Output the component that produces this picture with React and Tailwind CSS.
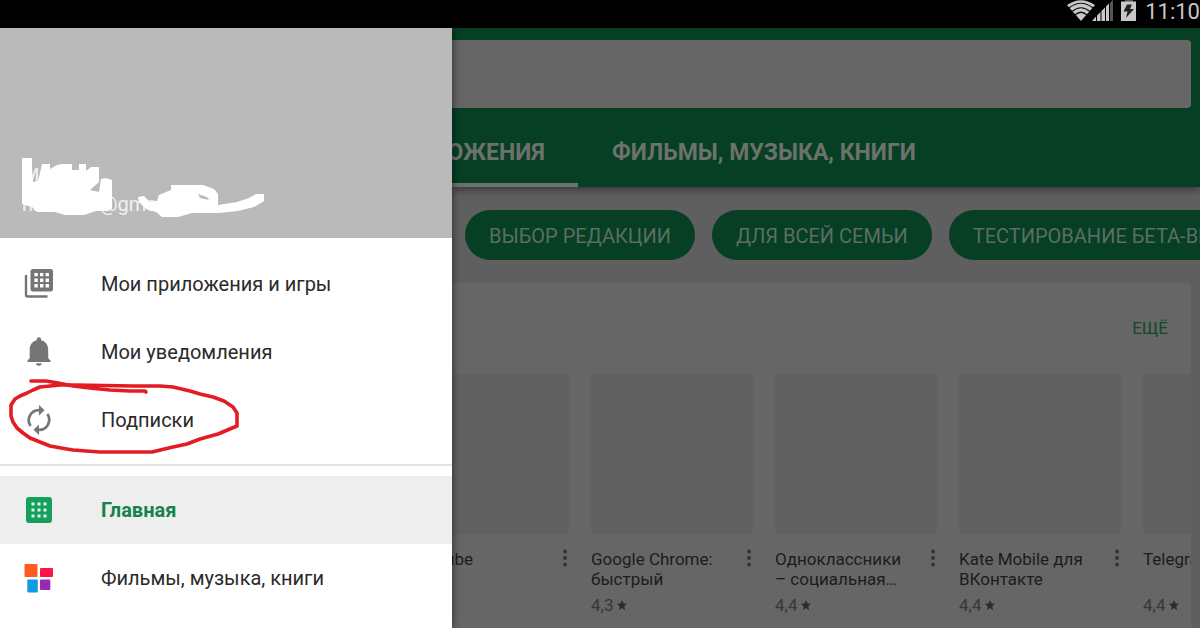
import React from 'react';

const chips = ['ВЫБОР РЕДАКЦИИ', 'ДЛЯ ВСЕЙ СЕМЬИ', 'ТЕСТИРОВАНИЕ БЕТА-ВЕРСИЙ'];

const apps = [
  { name: 'YouTube', rating: '' },
  { name: 'Google Chrome: быстрый', rating: '4,3' },
  { name: 'Одноклассники – социальная…', rating: '4,4' },
  { name: 'Kate Mobile для ВКонтакте', rating: '4,4' },
  { name: 'Telegram', rating: '4,4' },
];

function AppsIcon() {
  return (
    <svg viewBox="0 0 30 30" className="w-[30px] h-[30px]">
      <path d="M2 6v19.500a2 2 0 0 0 2 2h19.500" fill="none" stroke="#757575" strokeWidth="2.400" />
      <rect x="6.500" y="0" width="22.500" height="22.500" rx="2.500" fill="#757575" />
      <path d="M10.400 3.900h3.400v3.400h-3.400zM16 3.900h3.400v3.400H16zM21.600 3.900H25v3.400h-3.400zM10.400 9.500h3.400v3.400h-3.400zM16 9.500h3.400v3.400H16zM21.600 9.500H25v3.400h-3.400zM10.400 15.100h3.400v3.400h-3.400zM16 15.100h3.400v3.400H16zM21.600 15.100H25v3.400h-3.400z" fill="#fff" />
    </svg>
  );
}

function BellIcon() {
  return (
    <svg viewBox="0 0 30 30" className="w-[30px] h-[30px]" fill="#757575">
      <path d="M12.700 3.200V2.500a2.200 2.200 0 0 1 4.400 0v0.700c4.500 1 7.100 4.800 7.100 9.300v8.700l2.300 2.400v1.400H3.500v-1.400l2.200-2.400v-8.700c0-4.500 2.500-8.300 7-9.300z" />
      <path d="M12 26.300h5.700a2.800 2.400 0 0 1-5.700 0z" />
    </svg>
  );
}

function RenewIcon() {
  return (
    <svg viewBox="0 0 30 30" className="w-[30px] h-[30px]">
      <g fill="none" stroke="#757575" strokeWidth="2.700">
        <path d="M6.600 20.900A10 10 0 0 1 15 5.200" />
        <path d="M23.400 9.100A10 10 0 0 1 15 24.800" />
      </g>
      <path d="M15 0l5.500 5.300-5.500 5.300zM15 30l-5.500-5.300 5.500-5.300z" fill="#757575" />
    </svg>
  );
}

function HomeIcon() {
  return (
    <svg viewBox="0 0 30 30" className="w-[30px] h-[30px]">
      <rect x="2" y="2" width="26" height="26" rx="3" fill="#159f5c" />
      <path d="M7.500 7.500h3v3h-3zM13.500 7.500h3v3h-3zM19.500 7.500h3v3h-3zM7.500 13.500h3v3h-3zM13.500 13.500h3v3h-3zM19.500 13.500h3v3h-3zM7.500 19.500h3v3h-3zM13.500 19.500h3v3h-3zM19.500 19.500h3v3h-3z" fill="#dff5e8" />
    </svg>
  );
}

function MediaIcon() {
  return (
    <svg viewBox="0 0 30 30" className="w-[30px] h-[30px]">
      <rect x="0.500" y="1" width="13" height="13" rx="1" fill="#ff5a22" />
      <rect x="16" y="5" width="13" height="9" rx="1" fill="#fa1646" />
      <rect x="3.300" y="16.500" width="10.500" height="13" rx="1" fill="#0f9ae8" />
      <rect x="16" y="16.500" width="10.300" height="10.500" rx="1" fill="#9c27b0" />
    </svg>
  );
}

function StatusBar() {
  return (
    <header className="h-7 shrink-0 bg-black flex items-start justify-end overflow-hidden text-[#c8c8c8]">
      <svg viewBox="0 0 72 24" className="w-[72px] h-6" fill="currentColor">
        <path d="M0 5Q14-4.500 28 5L14 21z" />
        <g fill="none" stroke="#111" strokeWidth="1.200">
          <path d="M2 8Q14-1.500 26 8" />
          <path d="M5 11.500Q14 4 23 11.500" />
          <path d="M8 15Q14 9.500 20 15" />
        </g>
        <path d="M25 21L29 16.500V21zM30 15.500l3.500-3.500v9h-3.500zM34.500 11l3.500-3.500v13.500h-3.500zM39 6.500l3-3v17.500h-3z" />
        <path d="M43 2.500L46 0V21H43z" fill="#555" />
        <path d="M58 0h8v2h-8z" fill="#555" />
        <rect x="54" y="1.500" width="15" height="19.500" />
        <path d="M60 4.500h5l-2 4.500h4L59 18l1.500-6.500h-4z" fill="#222" />
      </svg>
      <time className="ml-1.5 text-[22px] leading-6">11:10</time>
    </header>
  );
}

function MenuItem({ icon, children, active }) {
  return (
    <li>
      <a
        href="#"
        className={`h-[68px] flex items-center pl-6 gap-[47px] text-xl ${
          active ? 'bg-[#eeeeee] text-[#15834a] font-bold' : 'text-[#2a2a2a]'
        }`}
      >
        {icon}
        <span>{children}</span>
      </a>
    </li>
  );
}

function Drawer() {
  return (
    <aside className="relative z-10 w-[452px] shrink-0 bg-white shadow-[0_0_8px_rgba(0,0,0,0.6)]">
      <div className="relative h-[210px] bg-[#bababa] px-[22px] pb-5 flex flex-col justify-end text-white">
        <p className="text-xl leading-7 text-white/80">Ми</p>
        <p className="text-xl leading-7 text-white/80">nnnnnn2@gmail</p>
        <svg viewBox="0 0 280 100" className="absolute left-0 bottom-[-2px] w-[280px] h-[100px]" fill="#fff">
          <path d="M22 18H32V28L33 42L38 41L40 33L42 24H50V29L57 25L62 24H72V30H79V24H86V31L91 27H99V42L90 50L99 52L101 39L106 38L112 40V68L107 71H96L84 75H65L55 72L37 72L32 67L22 64z" />
          <path d="M138 57L144 56L150 62L157 61L159 55L171 50V45H203L214 49L218 54V65L237 62L249 58L256 54H264V61L254 67L238 71L219 73H192L178 77H162L156 72L146 69L139 62z" />
          <path d="M198 54L207 57L209 60L200 58z" fill="#bababa" />
        </svg>
      </div>
      <nav className="relative">
        <ul className="pt-3 pb-2.5 border-b-2 border-[#e4e4e4]">
          <MenuItem icon={<AppsIcon />}>Мои приложения и игры</MenuItem>
          <MenuItem icon={<BellIcon />}>Мои уведомления</MenuItem>
          <MenuItem icon={<RenewIcon />}>Подписки</MenuItem>
        </ul>
        <ul className="pt-2.5">
          <MenuItem icon={<HomeIcon />} active>Главная</MenuItem>
          <MenuItem icon={<MediaIcon />}>Фильмы, музыка, книги</MenuItem>
        </ul>
        {/* hand-drawn marker around the subscriptions item */}
        <svg
          viewBox="0 0 260 90"
          className="absolute left-0 top-[132px] w-[260px] h-[90px] pointer-events-none"
          fill="none"
          stroke="#e31b23"
          strokeWidth="3.600"
          strokeLinecap="round"
          strokeLinejoin="round"
        >
          <path d="M31 11L46 11L58 13L73 16L90 18L110 20L130 21H145L146 22" />
          <path d="M60 15L40 17L33 20L27 23L20 26L15 29L11 35V46L13 52L17 58L23 63L30 68L40 72L50 76L61 78L73 80L86 81L100 82H152L173 77L187 74L200 69L218 64L237 56V43L233 37L224 31L213 27L200 24L190 21L173 17L160 16L133 16L75 15z" />
        </svg>
      </nav>
    </aside>
  );
}

function AppCard({ app }) {
  return (
    <li className="w-[162px] shrink-0">
      <div className="h-40 bg-[#616161]" />
      <div className="pt-[15px] flex items-start justify-between">
        <h3 className="w-[140px] h-10 text-[17px] leading-5 text-[#1c1c1c]">{app.name}</h3>
        <button type="button" aria-label="Меню">
          <svg viewBox="0 0 8 18" className="w-2 h-[18px]" fill="#343434">
            <circle cx="4" cy="2.500" r="2" />
            <circle cx="4" cy="9" r="2" />
            <circle cx="4" cy="15.500" r="2" />
          </svg>
        </button>
      </div>
      {app.rating && (
        <p className="mt-1 flex items-center gap-1 text-[17px] leading-6 text-[#373737]">
          {app.rating}
          <svg viewBox="0 0 24 24" className="w-2.5 h-2.5" fill="#2c2c2c">
            <path d="M12 0l3.500 8.300 8.500.7-6.500 5.900 2 9.100L12 19.200 4.500 24l2-9.100L0 9l8.500-.7z" />
          </svg>
        </p>
      )}
    </li>
  );
}

function Store() {
  return (
    <main className="flex-1 min-w-0 overflow-hidden bg-[#5f5f5f] flex flex-col">
      <div className="pt-3 bg-[#063f23] shadow-[0_3px_8px_rgba(0,0,0,0.4)]">
        <div className="mr-[9px]">
          <input type="search" aria-label="Поиск" className="block w-full h-[68px] bg-[#666666] rounded-r-sm outline-none" />
        </div>
        <nav className="h-[79px] flex text-[23px] font-bold whitespace-nowrap text-[#6b726c]">
          <a href="#" className="w-[126px] shrink-0 pr-[33px] pt-4 flex items-center justify-end border-b-4 border-[#6b726c]">
            ПРИЛОЖЕНИЯ
          </a>
          <a href="#" className="px-[34px] pt-4 border-b-4 border-transparent flex items-center">ФИЛЬМЫ, МУЗЫКА, КНИГИ</a>
        </nav>
      </div>
      <div className="pt-[23px] pl-[13px] flex gap-[17px]">
        {chips.map(chip => (
          <button
            key={chip}
            type="button"
            className="h-[50px] shrink-0 px-6 pt-0.5 rounded-full bg-[#063f23] text-xl text-[#5c6e63] whitespace-nowrap"
          >
            {chip}
          </button>
        ))}
      </div>
      <section className="mt-[23px] mr-[9px] flex-1 bg-[#666666] rounded-tr-sm overflow-hidden">
        <div className="h-[91px] pr-[23px] flex items-center justify-end">
          <a href="#" className="text-[17px] text-[#12482c]">ЕЩЁ</a>
        </div>
        {/* list is scrolled, so the first card starts behind the drawer */}
        <ul className="-ml-[45px] flex gap-[22px]">
          {apps.map(app => (
            <AppCard key={app.name} app={app} />
          ))}
        </ul>
      </section>
    </main>
  );
}

function App() {
  return (
    <div className="h-screen flex flex-col overflow-hidden font-['Roboto',sans-serif]">
      <StatusBar />
      <div className="flex-1 min-h-0 flex">
        <Drawer />
        <Store />
      </div>
    </div>
  );
}

export default App;
